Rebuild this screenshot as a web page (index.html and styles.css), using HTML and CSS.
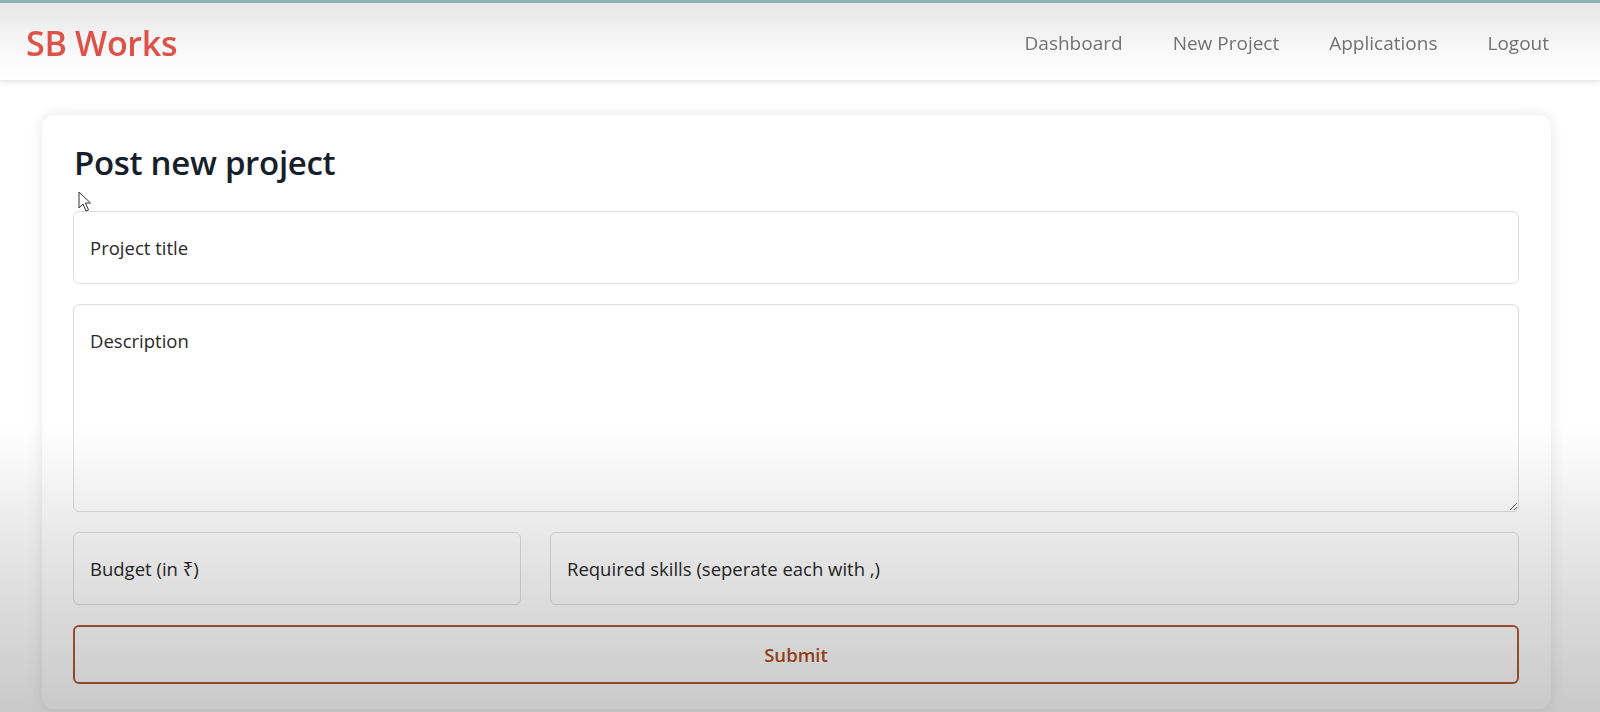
FILE: index.html
```html
<!DOCTYPE html>
<html lang="en">
<head>
<meta charset="utf-8">
<title>SB Works - New Project</title>
<link rel="stylesheet" href="styles.css">
</head>
<body>
<header class="navbar">
  <a class="brand" href="#">SB Works</a>
  <nav class="nav-links">
    <a href="#">Dashboard</a>
    <a href="#">New Project</a>
    <a href="#">Applications</a>
    <a href="#">Logout</a>
  </nav>
</header>
<main class="page">
  <section class="card">
    <h2 class="card-title">Post new project</h2>
    <form class="project-form">
      <input class="field" type="text" placeholder="Project title">
      <textarea class="field field-area" placeholder="Description"></textarea>
      <div class="field-row">
        <input class="field field-budget" type="number" placeholder="Budget (in ₹)">
        <input class="field field-skills" type="text" placeholder="Required skills (seperate each with ,)">
      </div>
      <button class="submit-btn" type="button">Submit</button>
    </form>
  </section>
</main>
<svg class="cursor" width="14" height="22" viewBox="0 0 14 22"><path d="M1 1 L1 17 L5 13 L8 20 L10.5 19 L7.5 12 L12.5 12 Z" fill="#fff" stroke="#333" stroke-width="1"/></svg>
<div class="shade"></div>
</body>
</html>
```
FILE: styles.css
```css
* { box-sizing: border-box; }
html, body { margin: 0; padding: 0; }
body {
  font-family: "Open Sans", "Noto Sans", sans-serif;
  background: #fff;
  border-top: 3px solid #8db1b8;
  height: 712px;
  overflow: hidden;
  color: #222;
}
.navbar {
  height: 77px;
  display: flex;
  align-items: center;
  justify-content: space-between;
  padding: 2px 26px 0 26px;
  background: linear-gradient(to bottom, #e6e6e6 0%, #f7f7f7 55%, #ffffff 100%);
  box-shadow: 0 2px 6px rgba(0,0,0,0.12);
  position: relative;
  z-index: 1;
}
.brand {
  font-size: 34px;
  font-weight: 600;
  color: #dd5349;
  text-decoration: none;
  letter-spacing: -0.3px;
}
.nav-links { display: flex; }
.nav-links a {
  font-size: 19px;
  color: #727272;
  text-decoration: none;
  padding: 0 25px;
}
.page {
  padding: 35px 49px 0 42px;
}
.card {
  background: #fff;
  border-radius: 12px;
  box-shadow: 0 0 14px rgba(0,0,0,0.10);
  padding: 28px 32px 25px 31px;
}
.card-title {
  margin: 0 0 28px 1px;
  font-size: 33px;
  font-weight: 600;
  color: #17202a;
  line-height: 1.2;
  letter-spacing: -0.3px;
}
.project-form {
  display: flex;
  flex-direction: column;
  gap: 20px;
}
.field {
  font-family: inherit;
  font-size: 18.5px;
  height: 73px;
  padding: 0 16px;
  border: 1px solid #dcdfe3;
  border-radius: 6px;
  background: #fff;
  color: #222;
  outline: none;
}
.field::placeholder { color: #2a2a2a; opacity: 1; }
.field-area {
  height: 208px;
  padding: 22px 16px;
  line-height: 1.5;
  resize: vertical;
}
.field-row {
  display: flex;
  gap: 29px;
}
.field-budget { flex: 0 0 448px; }
.field-skills { flex: 1 1 auto; min-width: 0; }
.submit-btn {
  font-family: inherit;
  height: 59px;
  font-size: 18.5px;
  font-weight: 600;
  color: #b24d22;
  background: transparent;
  border: 2px solid #b45a33;
  border-radius: 6px;
}
.cursor {
  position: absolute;
  left: 78px;
  top: 191px;
}
.shade {
  position: fixed;
  inset: 0;
  pointer-events: none;
  background: linear-gradient(to bottom, rgba(0,0,0,0) 0%, rgba(0,0,0,0) 60%, rgba(0,0,0,0.07) 72%, rgba(0,0,0,0.14) 85%, rgba(0,0,0,0.21) 100%);
}
```
